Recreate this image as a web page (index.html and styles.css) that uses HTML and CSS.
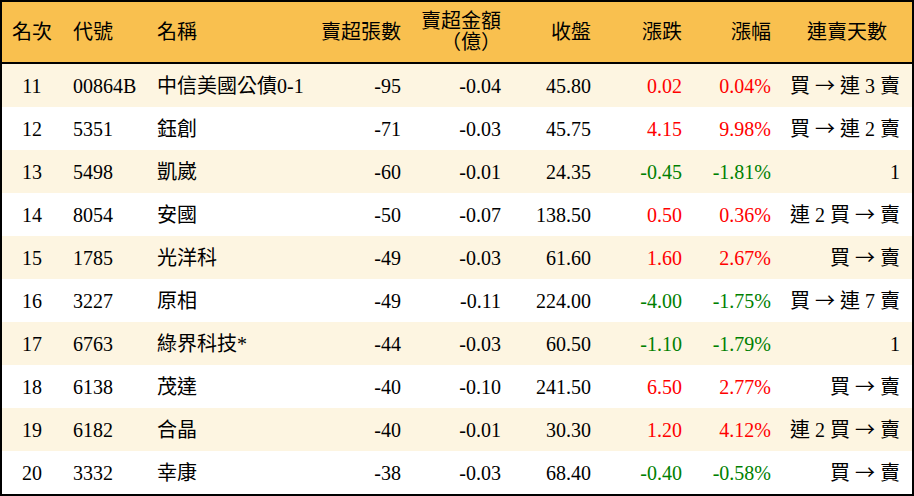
FILE: index.html
```html
<!DOCTYPE html>
<html lang="zh-Hant">
<head>
<meta charset="utf-8">
<title>賣超排行</title>
<link rel="stylesheet" href="styles.css">
</head>
<body>
<div class="board">
  <div class="row head">
    <div class="c rank">名次</div>
    <div class="c code">代號</div>
    <div class="c name">名稱</div>
    <div class="c num">賣超張數</div>
    <div class="c num">賣超金額<br><span class="po">（</span>億<span class="pc">）</span></div>
    <div class="c num">收盤</div>
    <div class="c num">漲跌</div>
    <div class="c num">漲幅</div>
    <div class="c days center">連賣天數</div>
  </div>

  <div class="row alt">
    <div class="c rank">11</div><div class="c code">00864B</div><div class="c name">中信美國公債0-1</div>
    <div class="c num">-95</div><div class="c num">-0.04</div><div class="c num">45.80</div>
    <div class="c num up">0.02</div><div class="c num up">0.04%</div><div class="c days">買 <span class="arr">→</span> 連 3 賣</div>
  </div>
  <div class="row">
    <div class="c rank">12</div><div class="c code">5351</div><div class="c name">鈺創</div>
    <div class="c num">-71</div><div class="c num">-0.03</div><div class="c num">45.75</div>
    <div class="c num up">4.15</div><div class="c num up">9.98%</div><div class="c days">買 <span class="arr">→</span> 連 2 賣</div>
  </div>
  <div class="row alt">
    <div class="c rank">13</div><div class="c code">5498</div><div class="c name">凱崴</div>
    <div class="c num">-60</div><div class="c num">-0.01</div><div class="c num">24.35</div>
    <div class="c num down">-0.45</div><div class="c num down">-1.81%</div><div class="c days">1</div>
  </div>
  <div class="row">
    <div class="c rank">14</div><div class="c code">8054</div><div class="c name">安國</div>
    <div class="c num">-50</div><div class="c num">-0.07</div><div class="c num">138.50</div>
    <div class="c num up">0.50</div><div class="c num up">0.36%</div><div class="c days">連 2 買 <span class="arr">→</span> 賣</div>
  </div>
  <div class="row alt">
    <div class="c rank">15</div><div class="c code">1785</div><div class="c name">光洋科</div>
    <div class="c num">-49</div><div class="c num">-0.03</div><div class="c num">61.60</div>
    <div class="c num up">1.60</div><div class="c num up">2.67%</div><div class="c days">買 <span class="arr">→</span> 賣</div>
  </div>
  <div class="row">
    <div class="c rank">16</div><div class="c code">3227</div><div class="c name">原相</div>
    <div class="c num">-49</div><div class="c num">-0.11</div><div class="c num">224.00</div>
    <div class="c num down">-4.00</div><div class="c num down">-1.75%</div><div class="c days">買 <span class="arr">→</span> 連 7 賣</div>
  </div>
  <div class="row alt">
    <div class="c rank">17</div><div class="c code">6763</div><div class="c name">綠界科技*</div>
    <div class="c num">-44</div><div class="c num">-0.03</div><div class="c num">60.50</div>
    <div class="c num down">-1.10</div><div class="c num down">-1.79%</div><div class="c days">1</div>
  </div>
  <div class="row">
    <div class="c rank">18</div><div class="c code">6138</div><div class="c name">茂達</div>
    <div class="c num">-40</div><div class="c num">-0.10</div><div class="c num">241.50</div>
    <div class="c num up">6.50</div><div class="c num up">2.77%</div><div class="c days">買 <span class="arr">→</span> 賣</div>
  </div>
  <div class="row alt">
    <div class="c rank">19</div><div class="c code">6182</div><div class="c name">合晶</div>
    <div class="c num">-40</div><div class="c num">-0.01</div><div class="c num">30.30</div>
    <div class="c num up">1.20</div><div class="c num up">4.12%</div><div class="c days">連 2 買 <span class="arr">→</span> 賣</div>
  </div>
  <div class="row">
    <div class="c rank">20</div><div class="c code">3332</div><div class="c name">幸康</div>
    <div class="c num">-38</div><div class="c num">-0.03</div><div class="c num">68.40</div>
    <div class="c num down">-0.40</div><div class="c num down">-0.58%</div><div class="c days">買 <span class="arr">→</span> 賣</div>
  </div>
</div>
</body>
</html>
```

FILE: styles.css
```css
html, body {
  margin: 0;
  padding: 0;
  background: #fff;
}

body {
  font-family: "Liberation Serif", "Noto Sans CJK TC", serif;
  font-size: 20px;
  color: #000;
}

.board {
  width: 914px;
  box-sizing: border-box;
  border: 2px solid #000;
}

.row {
  display: grid;
  grid-template-columns: 60px 84px 174px 92px 100px 90px 91px 89px 130px;
  height: 43px;
  align-items: center;
  background: #fff;
}

.row.alt {
  background: #fdf5e1;
}

.row.head {
  height: 60px;
  background: #f9c04f;
  border-bottom: 2px solid #000;
}

.row.head .c {
  line-height: 21px;
}

.c {
  white-space: nowrap;
  line-height: 22px;
}

.rank {
  text-align: center;
}

.code,
.name {
  padding-left: 11px;
}

.num {
  text-align: right;
  padding-right: 11px;
}

.days {
  text-align: right;
  padding-right: 12px;
}

.days.center {
  text-align: center;
  padding-right: 0;
}

.po,
.pc {
  display: inline-block;
  width: 20px;
}

.po {
  text-align: right;
}

.pc {
  text-align: left;
}

.arr {
  font-family: "Noto Sans CJK TC", sans-serif;
}

.up {
  color: #ff0000;
}

.down {
  color: #008000;
}
```
